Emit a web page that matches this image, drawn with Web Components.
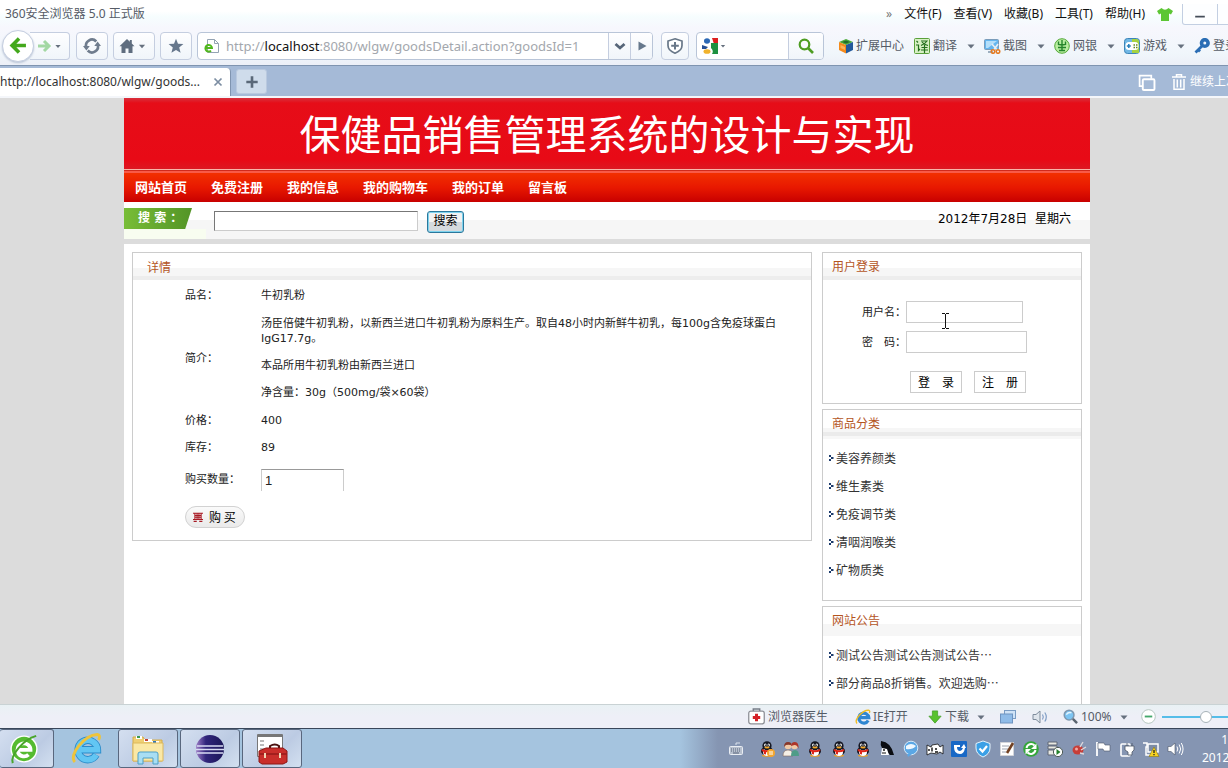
<!DOCTYPE html>
<html lang="zh-CN">
<head>
<meta charset="utf-8">
<title>保健品销售管理系统</title>
<style>
html, body { height: 100%; margin: 0; }
body { overflow: hidden; font: 12px/16px "Noto Sans", "Noto Sans CJK SC", sans-serif; color: #555b66; }
</style>
</head>
<body>
<browser-window>
  <title-bar slot="chrome"></title-bar>
  <tool-bar slot="chrome"></tool-bar>
  <tab-bar slot="chrome"></tab-bar>
  <shop-page></shop-page>
  <status-bar slot="foot"></status-bar>
  <task-bar slot="foot"></task-bar>
</browser-window>

<script>
const penguin = `<ellipse cx="8" cy="14.6" rx="5" ry="1.2" fill="#f0a020"/><ellipse cx="8" cy="10" rx="6" ry="4.6" fill="#151722"/><ellipse cx="8" cy="11" rx="4" ry="4" fill="#fff"/><ellipse cx="8" cy="4.8" rx="4.6" ry="4.6" fill="#151722"/><ellipse cx="6.3" cy="4" rx="1.2" ry="1.5" fill="#fff"/><ellipse cx="9.7" cy="4" rx="1.2" ry="1.5" fill="#fff"/><circle cx="6.6" cy="4.2" r=".6"/><circle cx="9.4" cy="4.2" r=".6"/><ellipse cx="8" cy="6.4" rx="2.6" ry="1" fill="#f5a623"/><path d="M3.2 8q4.8 2.6 9.6 0l.6 2q-5.4 2.6-10.8 0z" fill="#e02418"/><path d="M4.8 10l2.2.6v3l-2.2-.5z" fill="#e02418"/>`;
const ICONS = {
  back: `<path d="M8.500 1.500L2 8l6.500 6.500M2.500 8H15" fill="none" stroke="#43a81c" stroke-width="3.400"/>`,
  forward: `<path d="M8 3l5 5-5 5M13 8H2" fill="none" stroke="#a3d8a3" stroke-width="3"/>`,
  refresh: `<path d="M3 9.500A5.300 5.300 0 0 1 11.800 4M13 6.500A5.300 5.300 0 0 1 4.200 12" fill="none" stroke="#6f7c8d" stroke-width="2.400"/><path d="M0 8h6L3 12zM16 8h-6l3-4z" fill="#6f7c8d"/>`,
  home: `<path d="M8 1L.5 8.200h2V15h4v-4.500h3V15h4V8.200h2L12.800 5.600V2h-2v1.700z" fill="#5f6d7f"/>`,
  star: `<path d="M8 .8l2 5 5.400.3-4.200 3.400 1.400 5.300L8 11.900l-4.600 2.900 1.400-5.300L.6 6.100 6 5.800z" fill="#66778c"/>`,
  caret: `<path d="M4.500 6.500h7L8 10.500z" fill="#66707e"/>`,
  page: `<path d="M3.500 1.500h7l4 4v9h-11z" fill="#fff" stroke="#94a3b3"/><path d="M10.500 1.500v4h4" fill="none" stroke="#94a3b3"/><path d="M1.500 10H8a3.300 3.300 0 1 0-1 2.600" fill="none" stroke="#52b81e" stroke-width="2"/>`,
  chevron: `<path d="M3.500 6L8 10l4.500-4" fill="none" stroke="#566578" stroke-width="2.800"/>`,
  play: `<path d="M4.500 3.500L12.500 8l-8 4.500z" fill="#66788c"/>`,
  shield: `<path d="M8 .8L15 3v4.500q0 5-7 7.700-7-2.700-7-7.700V3z" fill="#fff" stroke="#687788" stroke-width="1.700"/><path d="M8 4v7.500M4.200 7.700h7.600" stroke="#687788" stroke-width="2"/>`,
  google: `<rect x="0" y="0" width="16" height="16" fill="#fff"/><path d="M10 0h6v6h-4z" fill="#dd1f1f"/><path d="M9 5h7v11H10q2-3-1-6z" fill="#1d9140"/><ellipse cx="5" cy="3" rx="3" ry="2.800" fill="#2b68b5"/><path d="M0 7l6 2-2 2H0z" fill="#254f94"/><ellipse cx="5" cy="13.500" rx="3.500" ry="2.300" fill="#f0b22c"/>`,
  lens: `<circle cx="6.500" cy="6.500" r="4.800" fill="none" stroke="#4e9d22" stroke-width="2.200"/><path d="M10 10l5 5" stroke="#4e9d22" stroke-width="2.600"/>`,
  cube: `<path d="M8 1l7 3-7 3-7-3z" fill="#4cab3a"/><path d="M1 4l7 3v8.500l-7-3.500z" fill="#f58a1c"/><path d="M15 4L8 7v8.500l7-3.500z" fill="#235a9c"/><path d="M4 4l4-1.500L12 4 8 5.500z" fill="#256b2c"/><path d="M2.500 7L7 9v3l-4.500-2z" fill="#ffb55a"/>`,
  trans: `<rect x=".5" y=".5" width="15" height="15" rx="1" fill="#d7f0c4" stroke="#5aa03a"/><path d="M2.500 3l1.500 1.500M2 7h2.500v5.500L6 11M7 3h6q-2 3-6 4.500M8 4q2 2.500 6 3.500M10.500 7v8M7.500 9.500h6M7 12h7" fill="none" stroke="#23701c" stroke-width="1.200"/>`,
  shot: `<rect x=".5" y="1.500" width="14" height="10" rx="1" fill="#64b5ee" stroke="#7b9cba"/><path d="M2 3h11L4 10H2z" fill="#b4dffa"/><path d="M4 14h5" stroke="#8097ad" stroke-width="1.500"/><path d="M8 6l6 7M14 6l-5 7" stroke="#e9eef2" stroke-width="1.600"/><circle cx="9" cy="13.500" r="1.800" fill="none" stroke="#e57b21" stroke-width="1.500"/><circle cx="14" cy="13.500" r="1.800" fill="none" stroke="#e57b21" stroke-width="1.500"/>`,
  bank: `<circle cx="8" cy="8" r="7.300" fill="#b9eda0" stroke="#54a938"/><path d="M4.500 3.500v3L8 7l3.500-.5v-3M8 2v11M4 9.500h8M5 12.500h6" fill="none" stroke="#24852a" stroke-width="1.400"/>`,
  game: `<rect x=".5" y=".5" width="15" height="15" rx="3" fill="#71b8e5" stroke="#3d85b8"/><path d="M8 1h4q3 0 3 3v11H8z" fill="#a6d33f"/><rect x="1.500" y="4" width="13" height="8" rx="3.500" fill="#fff"/><path d="M4.800 6v4M2.800 8h4" stroke="#2980bc" stroke-width="1.500"/><path d="M9.500 7h4M9.500 9.500h4" stroke="#648a20" stroke-width="1.500" stroke-dasharray="1.500 1"/>`,
  key: `<circle cx="10.800" cy="5" r="3.300" fill="none" stroke="#2a6db4" stroke-width="3.600"/><path d="M8 8L1.500 14.500M3.500 11l2.500 2.500" stroke="#2a6db4" stroke-width="2.800"/>`,
  shirt: `<path d="M4.500 2L0 5l2 3.500 2-1V15h8V7.500l2 1L16 5l-4.500-3Q8 5.500 4.500 2z" fill="#5cc634"/>`,
  min: `<path d="M2.500 11h11" stroke="#444d58" stroke-width="2"/>`,
  close: `<path d="M4 4l8 8M12 4l-8 8" stroke="#7c8da2" stroke-width="2"/>`,
  plus: `<path d="M8 1.500v13M1.500 8h13" stroke="#5a6878" stroke-width="3"/>`,
  copy: `<path d="M4.500 11.500H1.500v-10h11v3" fill="none" stroke="#fff" stroke-width="1.600"/><rect x="4.500" y="5" width="11" height="10" rx="1" fill="none" stroke="#fff" stroke-width="1.800"/>`,
  trash: `<path d="M1 3h14M5.500 2.500V.8h5v1.700M3 5v10.200h10V5M6.300 5.500v8M9.700 5.500v8" fill="none" stroke="#fff" stroke-width="1.500"/>`,
  arrow: `<path d="M2 2h4v4H2zM6 6h5v4H6zM2 10h4v4H2z" fill="#1d3c6d"/>`,
  cart: `<path d="M0 2h16M3 2v9M13 2v9M0 12h16M3 5.500h10M3 8.500h10M6.500 2v9M9.500 2v9M1 15h5M10 15h5" fill="none" stroke="#a81923" stroke-width="1.700"/>`,
  doctor: `<path d="M5 3V1h6v2" fill="none" stroke="#777d88" stroke-width="1.400"/><rect x=".7" y="3" width="14.600" height="12" rx="2" fill="#fff" stroke="#8d8f96" stroke-width="1.200"/><path d="M8 5.500v7M4.500 9h7" stroke="#d42026" stroke-width="2.800"/>`,
  ie: `<path d="M13.200 11.500a5 5 0 1 1 .6-2.900H4" fill="none" stroke="#2f86d1" stroke-width="3.200"/><path d="M2 14.500C-1.500 10.500 8 1 13.500 1.300q2 .2.800 2.700" fill="none" stroke="#f0bd24" stroke-width="1.400"/>`,
  down: `<path d="M5 1h6v6h4l-7 8-7-8h4z" fill="#58c22e" stroke="#3f9a22" stroke-width=".8"/>`,
  windows: `<rect x="4.500" y="1.500" width="11" height="8" fill="#cfe2f6" stroke="#7a9cc4"/><rect x=".5" y="5" width="12" height="9" fill="#8fbbe8" stroke="#6e93c0"/>`,
  sound: `<path d="M1 5.500h3L8 2v12L4 10.500H1z" fill="#dfe5ec" stroke="#7f8c9c"/><path d="M10.500 5.500q1.600 2.500 0 5M12.800 3.500q3 4.500 0 9" fill="none" stroke="#7f9dc4" stroke-width="1.200"/>`,
  zoom: `<circle cx="6.500" cy="6.500" r="5.200" fill="#7cc4f2" stroke="#7e98b0" stroke-width="1.600"/><path d="M3.500 6q2-3 5.500-2" stroke="#e4f5ff" fill="none" stroke-width="1.500"/><path d="M10.500 10.500l4.500 4.500" stroke="#5a6470" stroke-width="2.600"/>`,
  minus: `<circle cx="8" cy="8" r="7.300" fill="#fff" stroke="#b3c4bd"/><path d="M4 8h8" stroke="#45a86c" stroke-width="2"/>`,
  browser360: `<circle cx="16" cy="16" r="14.500" fill="#fff"/><circle cx="16" cy="16" r="13" fill="#55bb30"/><path d="M9.500 17h13.500a7 7 0 1 0-2.200 5" fill="none" stroke="#fff" stroke-width="4"/><path d="M4 31C1 23 15 6 29 2" fill="none" stroke="#49a52b" stroke-width="2.200"/>`,
  ieBig: `<path d="M26 22.500a10 10 0 1 1 1.300-5.200H10" fill="none" stroke="#2b8bc9" stroke-width="7.600"/><path d="M26 22.500a10 10 0 1 1 1.300-5.200H10" fill="none" stroke="#62c6f3" stroke-width="5.800"/><path d="M4 30C-3 23 14 2 27 1.500q4 .5 1.500 5.500" fill="none" stroke="#eec43c" stroke-width="3"/>`,
  folder: `<path d="M1 4h10l2 3h17v21H1z" fill="#efcf73" stroke="#d4ac4c"/><path d="M4 3h6v3H4z" fill="#fff"/><path d="M5 3h3v2H5z" fill="#3b9a4f"/><path d="M12 6h8v3h-8z" fill="#fff"/><path d="M13 6h3v2h-3z" fill="#c44433"/><path d="M20 8h7v3h-7z" fill="#fff"/><path d="M21 8h3v2h-3z" fill="#2d76ba"/><path d="M1 10h30v18H1z" fill="#fae8a5" stroke="#dcb85c"/><path d="M6 31V21q0-2 2-2h16q2 0 2 2v10h-5v-6H11v6z" fill="#a8def3" stroke="#4d9fc7"/>`,
  eclipse: `<defs><linearGradient id="g"><stop offset="0" stop-color="#9c7cc6"/><stop offset=".35" stop-color="#30257b"/><stop offset="1" stop-color="#1b1658"/></linearGradient></defs><circle cx="16" cy="16" r="14" fill="url(#g)"/><path d="M3 13h26M2 16.500h28M3 20h26" stroke="#d9dcf3" stroke-width="1.300"/>`,
  toolbox: `<path d="M1.500 1.500h25v22h-25z" fill="#fff" stroke="#777"/><path d="M2 3h24" stroke="#777" stroke-width="2"/><path d="M4 8h4M4 12h4M4 16h4" stroke="#777"/><path d="M14 16v-3q5-3 9 0v3" fill="none" stroke="#4a1210" stroke-width="2"/><path d="M3 18l7-3h17l4 3v11l-4 2H6l-3-2z" fill="#c92e2b" stroke="#8d1615"/><path d="M3.500 21h27" stroke="#7d1012"/><path d="M9 20v5M24 20v5" stroke="#f1d5b5" stroke-width="2"/>`,
  keyboard: `<path d="M8 4V2h4" fill="none" stroke="#dce3ed"/><rect x="1.500" y="5.500" width="13" height="8" rx="1" fill="#b7c0ce" stroke="#e9edf3"/><path d="M3 8h10M3 10h10" stroke="#56627a" stroke-dasharray="1 1"/><path d="M5 12h6" stroke="#56627a"/>`,
  qq: penguin,
  qqPlus: penguin + `<circle cx="12" cy="12" r="4" fill="#f3a62f"/><path d="M10 11h4M10 13h4" stroke="#fff"/>`,
  people: `<circle cx="5" cy="5" r="3.300" fill="#f1c9a5"/><path d="M1 6q0-5 4-5t4 4q-2-2-6-1z" fill="#87382a"/><circle cx="11.500" cy="5" r="3.300" fill="#f1c9a5"/><path d="M8 5q0-4 4-4t3.500 7q-1-4-4-4z" fill="#ad3428"/><path d="M0 15q0-6 5-6t5 6z" fill="#f5efe6" stroke="#85695c" stroke-width=".6"/><path d="M8 15q0-6 4-6t4 6z" fill="#4f9c88"/>`,
  cat: `<path d="M2 0q10 1 13 14h-4L7 10l-4 1V7q-2-3-1-7z" fill="#0b0d12"/><path d="M3 7l5 1 2 6H2z" fill="#fff"/><circle cx="5" cy="9" r=".9"/><path d="M3 12h4" stroke="#111"/>`,
  bubble: `<circle cx="8" cy="7" r="6.800" fill="#5ba7e5" stroke="#d6eafa"/><path d="M4 13l1 3 4-3" fill="#5ba7e5"/><path d="M3 5q5-4 10 0-4 4-10 3z" fill="#eff8ff"/>`,
  fish: `<path d="M0 4l4 2 1-2 6-1 2 3 3-2v9l-3-2-3 2-6-1-4 2z" fill="#fff" stroke="#111" stroke-width=".8"/><path d="M5 6.500v4M8 8h2M8 11h3M2 8v2" stroke="#111" stroke-width="1.400"/>`,
  blueBox: `<rect width="16" height="16" rx="1" fill="#1868c6"/><path d="M3 4h6v2H6q0 4 3 4 2 0 3-3h-2l3-4 2 4h-1q-1 6-5 6-6 0-6-7z" fill="#fff"/>`,
  guard: `<path d="M8 0l7 2.500V7q0 6-7 9-7-3-7-9V2.500z" fill="#3ba0e6" stroke="#e5f4fd"/><path d="M4.500 7.500L7.500 10.500 12 5" fill="none" stroke="#fff" stroke-width="2.200"/>`,
  note: `<path d="M1.500 1.500h13v13h-13z" fill="#fff" stroke="#d3d5da"/><path d="M3 5h7M3 8h6M3 11h4" stroke="#9ca3b0"/><path d="M14 2L8 12" stroke="#714022" stroke-width="2.600"/>`,
  sync: `<circle cx="8" cy="8" r="7.800" fill="#35a63b"/><path d="M3.500 7a4.700 4.700 0 0 1 8-2.500M12.500 9a4.700 4.700 0 0 1-8 2.500" fill="none" stroke="#fff" stroke-width="2"/><path d="M13.500 2.500V8H8zM2.500 13.500V8H8z" fill="#fff"/>`,
  server: `<path d="M1 1h9v3H1zM1 5h9v3H1zM1 9h8v5H1z" fill="#e8e8e2" stroke="#5f6674"/><circle cx="11" cy="11" r="4.600" fill="#fff" stroke="#4d5a55"/><path d="M9.500 8l4 3-4 3z" fill="#23802a"/>`,
  red: `<ellipse cx="7" cy="9" rx="5.500" ry="4.500" fill="#c73e38"/><path d="M9 6l3-5M10 9l5-3M9 12l4 1" stroke="#ddd8dc" stroke-width="1.400"/><circle cx="5.500" cy="8" r="1.500" fill="#f0a8a2"/>`,
  flag: `<path d="M2 1v14" stroke="#fff" stroke-width="1.800"/><path d="M3 2h6l1 2h5v6H9L8 8H3z" fill="#fff" stroke="#4c5566" stroke-width=".6"/>`,
  plug: `<rect x="2" y="3" width="9" height="12" rx="1" fill="none" stroke="#fff" stroke-width="1.600"/><path d="M8 2v3M13 2v3M6 5h9v4l-2 2v3H9v-3L6 9z" fill="#fff" stroke="#4c5566" stroke-width=".8"/>`,
  network: `<rect x="5" y="3" width="10" height="8" fill="#7c8ca6" stroke="#fff" stroke-width="1.500"/><path d="M0 2h4v4H3v8h5" fill="none" stroke="#fff" stroke-width="1.500"/><path d="M11 6l5 9.500H6z" fill="#f6d21f" stroke="#8a7512" stroke-width=".6"/><path d="M11 9v3M11 13v1.200" stroke="#222" stroke-width="1.300"/>`,
  volume: `<path d="M1 5.500h3L8 2v12L4 10.500H1z" fill="#fff" stroke="#4c5566" stroke-width=".6"/><path d="M10 5.500q1.600 2.500 0 5M12.200 3.500q3 4.500 0 9M14.300 2q3.500 6 0 12" fill="none" stroke="#fff"/>`
};

customElements.define('ui-icon', class extends HTMLElement {
  connectedCallback() {
    const name = this.getAttribute('name');
    const size = this.getAttribute('size') || 16;
    const box = ['browser360', 'ieBig', 'folder', 'eclipse', 'toolbox'].includes(name) ? 32 : 16;
    if (!this.shadowRoot) this.attachShadow({ mode: 'open' });
    this.shadowRoot.innerHTML = `<style>:host{display:inline-block;flex:none;line-height:0}svg{display:block;overflow:visible}</style>
      <svg width="${size}" height="${size}" viewBox="0 0 ${box} ${box}" aria-hidden="true">${ICONS[name]}</svg>`;
  }
});

function define(name, css, html) {
  const template = document.createElement('template');
  template.innerHTML = `<style>:host,*{box-sizing:border-box}button,input{font:inherit;color:inherit;margin:0}a{color:inherit;text-decoration:none}${css}</style>${html}`;
  customElements.define(name, class extends HTMLElement {
    constructor() {
      super();
      this.attachShadow({ mode: 'open' }).append(template.content.cloneNode(true));
    }
  });
}

define('browser-window', `
  :host{display:flex;flex-direction:column;height:100vh;background:#fff}
  main{flex:1;min-height:0;overflow:hidden;display:flex;background:#dcdcdc}
  ::slotted(*){flex:none}
  ::slotted(shop-page){flex:1}
`, `<slot name="chrome"></slot><main><slot></slot></main><slot name="foot"></slot>`);

define('title-bar', `
  :host{display:flex;align-items:center;height:28px;padding-left:5px;background:linear-gradient(#fff 40%,#f6fdfe 60%,#f7f7fd);white-space:nowrap}
  nav{margin-left:auto;display:flex;align-items:center;gap:12px;color:#111}
  .more{color:#777}
  .win{align-self:flex-start;display:flex;margin-left:-3px}
  button{height:21px;width:36px;padding:0;border:1px solid #c3cfe2;border-top:0;border-radius:0 0 0 3px;background:#fdfeff;display:flex;align-items:center;justify-content:center}
  .edge{width:10px;border-width:0 0 1px;border-radius:0}
`, `<span>360安全浏览器 5.0 正式版</span>
  <nav><span class="more">»</span><a href="#">文件(F)</a><a href="#">查看(V)</a><a href="#">收藏(B)</a><a href="#">工具(T)</a><a href="#">帮助(H)</a><ui-icon name="shirt"></ui-icon>
  <span class="win"><button aria-label="最小化"><ui-icon name="min" size="14"></ui-icon></button><button class="edge" aria-label="最大化"></button></span></nav>`);

define('tool-bar', `
  :host{display:flex;align-items:center;height:37px;padding:0 0 2px 2px;background:linear-gradient(#f7f7fd,#f0f6fb 70%,#eceff7);white-space:nowrap}
  button{height:28px;padding:0;border:1px solid #c5cee0;border-radius:4px;background:linear-gradient(#fefeff,#f0f5fa);display:flex;align-items:center;justify-content:center;flex:none}
  .back{width:32px;height:32px;border-radius:50%;background:#fff;z-index:1;box-shadow:0 1px 2px #b9c4d6}
  .fwd{width:40px;margin-left:-4px;margin-right:6px;border-left:0;border-radius:0 4px 4px 0}
  .sq{width:32px;margin-right:5px}
  .home{width:42px;margin-right:5px}
  .field{display:flex;height:28px;border:1px solid #b9c5d8;border-radius:4px;background:#fff;overflow:hidden}
  .field button{height:26px;border-width:0 0 0 1px;border-radius:0;width:22px}
  .address{flex:1;min-width:0;margin-right:8px}
  .url{position:relative;flex:1;display:flex;align-items:center;gap:6px;padding-left:6px;font-size:13px;color:#a3a7ad;overflow:hidden}
  .url b{font-weight:400;color:#111}
  .url input{position:absolute;inset:0;width:100%;border:0;background:transparent;outline:0}
  .safe{width:28px;margin-right:7px}
  .search{width:128px;margin-right:14px;align-items:center;padding-left:5px;flex:none}
  .search input{flex:1;min-width:0;border:0;background:transparent;outline:0}
  .search .go{width:35px}
  nav{display:flex;flex:0 0 390px;overflow:hidden}
  nav a{display:flex;align-items:center;gap:3px;width:70px;flex:none}
  nav a:first-child{width:76px;gap:2px}
  nav a ui-icon+ui-icon{margin-left:3px}
`, `<button class="back" aria-label="后退"><ui-icon name="back" size="17"></ui-icon></button>
  <button class="fwd" aria-label="前进"><ui-icon name="forward"></ui-icon><ui-icon name="caret" size="12"></ui-icon></button>
  <button class="sq" aria-label="刷新"><ui-icon name="refresh" size="18"></ui-icon></button>
  <button class="home" aria-label="主页"><ui-icon name="home"></ui-icon><ui-icon name="caret" size="14"></ui-icon></button>
  <button class="sq" aria-label="收藏"><ui-icon name="star"></ui-icon></button>
  <div class="field address"><div class="url"><ui-icon name="page"></ui-icon><span>http://<b>localhost</b>:8080/wlgw/goodsDetail.action?goodsId=1</span><input type="text" aria-label="地址"></div>
    <button aria-label="历史"><ui-icon name="chevron"></ui-icon></button><button aria-label="转到"><ui-icon name="play"></ui-icon></button></div>
  <button class="safe" aria-label="安全"><ui-icon name="shield"></ui-icon></button>
  <div class="field search"><ui-icon name="google"></ui-icon><ui-icon name="caret" size="10"></ui-icon><input type="text" aria-label="搜索"><button class="go" aria-label="搜索"><ui-icon name="lens"></ui-icon></button></div>
  <nav><a href="#"><ui-icon name="cube"></ui-icon>扩展中心</a><a href="#"><ui-icon name="trans"></ui-icon>翻译<ui-icon name="caret"></ui-icon></a><a href="#"><ui-icon name="shot"></ui-icon>截图<ui-icon name="caret"></ui-icon></a><a href="#"><ui-icon name="bank"></ui-icon>网银<ui-icon name="caret"></ui-icon></a><a href="#"><ui-icon name="game"></ui-icon>游戏<ui-icon name="caret"></ui-icon></a><a href="#"><ui-icon name="key"></ui-icon>登录</a></nav>`);

define('tab-bar', `
  :host{display:flex;height:33px;padding-top:2px;background:#a5bad7;border-top:1px solid #7f94b0;border-bottom:2px solid #f4f6fa;white-space:nowrap}
  .tab{display:flex;align-items:center;width:231px;background:#fff;border-right:1px solid #7f94b0;border-radius:0 4px 0 0;color:#333}
  .tab span{flex:1}
  button{padding:0;border:0;background:none;display:flex;align-items:center;justify-content:center}
  .tab button{width:24px}
  .new{width:31px;margin:1px 0 2px 5px;background:#cfdceb;border:1px solid #b9c9df;border-radius:3px}
  .right{margin-left:auto;display:flex;align-items:center;color:#fff;flex:0 0 90px;overflow:hidden}
  .right ui-icon+ui-icon{margin:0 3px 0 16px}
`, `<div class="tab"><span>http://localhost:8080/wlgw/goods...</span><button aria-label="关闭标签"><ui-icon name="close" size="14"></ui-icon></button></div>
  <button class="new" aria-label="新建标签"><ui-icon name="plus" size="14"></ui-icon></button>
  <div class="right"><ui-icon name="copy" size="17"></ui-icon><ui-icon name="trash"></ui-icon><span>继续上次</span></div>`);

define('panel-box', `
  :host{display:block;border:1px solid #ccc;background:#fff}
  h2{margin:0;height:27px;padding:5px 9px 0;font:12px/16px "Noto Sans CJK SC",sans-serif;color:#b4551f;background:linear-gradient(#fff 15px,#f6f6f6 15px 23px,#ededed 23px)}
  :host([wide]) h2{padding:6px 14px 0}
  :host([list]) h2{height:29px;background:linear-gradient(#fff 18px,#f6f6f6 18px 22px,#ebebeb 22px 26px,#f7f7f7 26px)}
  :host([flat]) h2{background:linear-gradient(#fff 17px,#f6f6f6 17px)}
`, `<h2><slot name="heading"></slot></h2><slot></slot>`);

define('link-list', `
  :host{display:block;padding:5px 5px 16px;color:#333;font:12px/28px "Noto Sans CJK SC",sans-serif}
`, `<slot></slot>`);

define('link-item', `
  :host{display:block}
  a{display:flex;align-items:center;height:28px}
`, `<a href="#"><ui-icon name="arrow" size="8"></ui-icon><slot></slot></a>`);

define('site-header', `
  :host{display:block;background:#fff;border-bottom:5px solid #dcdcdc}
  .banner{height:72px;border-bottom:1px solid #f9b5a8;background:linear-gradient(#d8303c,#e60d18 5px,#e80a16 62px,#dc1822);display:flex;align-items:flex-start;justify-content:center}
  h1{margin:0;font:400 41px/68px "Noto Sans CJK SC",sans-serif;color:#fff}
  nav{height:32px;display:flex;align-items:center;gap:24px;padding:2px 11px 0;background:linear-gradient(#d02a1c 1px,#f85a48 1px 3px,#f23000 3px,#e81800 55%,#c80000);font:bold 13px/20px "Noto Sans CJK SC",sans-serif;color:#fff}
  form{height:37px;display:flex;align-items:flex-start;padding-top:6px;background:linear-gradient(#fff 18px,#f6f6f6 18px);color:#000;font:12px/18px "DejaVu Sans","Noto Sans CJK SC",sans-serif}
  label{width:82px;height:31px;margin-right:8px;background:linear-gradient(transparent 21px,#f8fdf0 21px)}
  label span{display:block;width:68px;height:21px;line-height:21px;padding-left:14px;font-weight:bold;color:#fff;background:linear-gradient(90deg,#78bd37,#539426);clip-path:polygon(0 0,100% 0,90% 100%,0 100%)}
  input{width:204px;height:20px;margin-top:3px;border:1px solid #ccc;border-top-color:#777;border-left-color:#777;background:#fff}
  button{width:37px;height:22px;margin:3px 0 0 9px;padding:0 0 3px;line-height:16px;border:1px solid #2c789c;border-radius:3px;box-shadow:inset 0 0 0 1px #7ed3ee;background:linear-gradient(#f2f2f2 50%,#d5dade 50%);color:#000}
  time{margin:2px 19px 0 auto}
`, `<div class="banner"><h1>保健品销售管理系统的设计与实现</h1></div>
  <nav><a href="#">网站首页</a><a href="#">免费注册</a><a href="#">我的信息</a><a href="#">我的购物车</a><a href="#">我的订单</a><a href="#">留言板</a></nav>
  <form onsubmit="return false"><label for="q"><span>搜 索 ：</span></label><input id="q" type="text"><button>搜索</button><time datetime="2012-07-28">2012年7月28日&nbsp; 星期六</time></form>`);

define('goods-detail', `
  :host{display:block;padding:2px 30px 4px 52px;color:#222;font:11px/15px "DejaVu Sans","Noto Sans CJK SC",sans-serif}
  table{width:100%;border-collapse:collapse}
  th,td{padding:0;font-weight:400;text-align:left;height:27px}
  th{width:76px}
  .intro td{height:98px}
  p{margin:0 0 12px}
  p:last-child{margin:0}
  .qty td{height:37px}
  .qty input{display:block;width:83px;height:22px;padding:0 3px;border:1px solid #ccc;border-top-color:#999;border-bottom:0;font:13px/20px "Liberation Sans",sans-serif}
  .buy td{height:38px}
  button{display:flex;align-items:center;gap:6px;width:60px;height:22px;padding:0 7px;border:1px solid #d2d2d2;border-radius:11px;background:linear-gradient(#fafafa,#eaeaea);font:12px/20px "Noto Sans CJK SC",sans-serif;color:#000;white-space:nowrap}
`, `<form onsubmit="return false"><table>
  <tr><th>品名：</th><td>牛初乳粉</td></tr>
  <tr class="intro"><th>简介：</th><td><p>汤臣倍健牛初乳粉，以新西兰进口牛初乳粉为原料生产。取自48小时内新鲜牛初乳，每100g含免疫球蛋白IgG17.7g。</p><p>本品所用牛初乳粉由新西兰进口</p><p>净含量：30g（500mg/袋×60袋）</p></td></tr>
  <tr><th>价格：</th><td>400</td></tr>
  <tr><th>库存：</th><td>89</td></tr>
  <tr class="qty"><th><label for="n">购买数量：</label></th><td><input id="n" type="text" value="1"></td></tr>
  <tr class="buy"><td colspan="2"><button><ui-icon name="cart" size="10"></ui-icon>购 买</button></td></tr>
  </table></form>`);

define('login-form', `
  :host{display:block;position:relative;padding:21px 0 10px 39px;color:#222;font:11px/15px "DejaVu Sans","Noto Sans CJK SC",sans-serif}
  div{display:flex;align-items:center;margin-bottom:8px}
  label{width:44px;flex:none}
  input{width:117px;height:22px;border:1px solid #ccc;background:#fff}
  #p{width:121px}
  .act{gap:12px;margin:18px 0 0 48px}
  button{width:52px;height:22px;padding:0;border:1px solid #ccc;background:#fff;font:12px/18px "Noto Sans CJK SC",sans-serif;color:#000}
  svg{position:absolute;left:119px;top:33px}
`, `<form onsubmit="return false"><div><label for="u">用户名：</label><input id="u" type="text"></div><div><label for="p">密　码：</label><input id="p" type="password"></div>
  <div class="act"><button>登　录</button><button type="button">注　册</button></div></form>
  <svg width="7" height="16" viewBox="0 0 7 16" aria-hidden="true"><path d="M0 .5h3M4 .5h3M3.500 1v14M0 15.500h3M4 15.500h3" stroke="#111" fill="none"/></svg>`);

define('shop-page', `
  :host{display:flex;justify-content:center;padding-right:14px;min-width:0}
  .sheet{width:100%;max-width:966px;background:#fff}
  .cols{display:grid;grid-template-columns:minmax(0,1fr) 260px;gap:10px;padding:8px;align-items:start}
  aside{display:grid;gap:5px}
`, `<div class="sheet"><site-header></site-header><div class="cols">
  <panel-box wide><span slot="heading">详情</span><goods-detail></goods-detail></panel-box>
  <aside>
    <panel-box><span slot="heading">用户登录</span><login-form></login-form></panel-box>
    <panel-box list><span slot="heading">商品分类</span><link-list><link-item>美容养颜类</link-item><link-item>维生素类</link-item><link-item>免疫调节类</link-item><link-item>清咽润喉类</link-item><link-item>矿物质类</link-item></link-list></panel-box>
    <panel-box list flat><span slot="heading">网站公告</span><link-list><link-item>测试公告测试公告测试公告…</link-item><link-item>部分商品8折销售。欢迎选购…</link-item></link-list></panel-box>
  </aside></div></div>`);

define('status-bar', `
  :host{display:flex;align-items:center;justify-content:flex-end;height:24px;border-top:1px solid #c9d2d4;background:linear-gradient(#e9f1f4,#eeeff7 50%);white-space:nowrap;overflow:hidden}
  span,a{display:flex;align-items:center;gap:3px;flex:none}
  .a{width:107px}.b{width:73px;gap:2px}.c{width:72px}.d{width:32px}.e{width:31px}.f{width:78px}
  .c ui-icon+ui-icon,.f ui-icon+ui-icon{margin-left:1px}
  input{appearance:none;width:66px;height:16px;margin-left:6px;background:linear-gradient(#56bde8,#56bde8) center/100% 2px no-repeat;flex:none}
  input::-webkit-slider-thumb{appearance:none;width:12px;height:12px;border:1px solid #a7b2b8;border-radius:50%;background:#fff}
`, `<a class="a" href="#"><ui-icon name="doctor" size="17"></ui-icon>浏览器医生</a><a class="b" href="#"><ui-icon name="ie"></ui-icon>IE打开</a><a class="c" href="#"><ui-icon name="down" size="14"></ui-icon>下载<ui-icon name="caret"></ui-icon></a>
  <span class="d"><ui-icon name="windows"></ui-icon></span><span class="e"><ui-icon name="sound"></ui-icon></span><span class="f"><ui-icon name="zoom" size="15"></ui-icon>100%<ui-icon name="caret"></ui-icon></span><ui-icon name="minus" size="15"></ui-icon><input type="range" min="0" max="100" value="70" aria-label="缩放">`);

define('task-bar', `
  :host{display:flex;height:40px;border-top:1px solid #39465a;background:linear-gradient(90deg,#a5c4df,#a5c4df 680px,#8595b2 718px);overflow:hidden}
  button{width:60px;margin-right:2px;padding:0;border:1px solid #59677e;border-radius:3px;background:linear-gradient(135deg,#d4dff0,#bccbe3 60%,#d3e0f0);display:flex;align-items:center;justify-content:center;flex:none}
  .start{width:54px;padding-right:5px;border-left:0}
  .plain{border-color:transparent;background:none}
  .tray{margin-left:auto;display:flex;align-items:center;gap:8px;color:#fff;flex:none}
  .tray ui-icon:first-child{margin-right:7px}
  .clock{margin-left:11px;width:26px;height:36px;line-height:18px;text-align:right;white-space:nowrap}
`, `<button class="start" aria-label="360浏览器"><ui-icon name="browser360" size="30"></ui-icon></button><button class="plain" aria-label="Internet Explorer"><ui-icon name="ieBig" size="31"></ui-icon></button><button aria-label="资源管理器"><ui-icon name="folder" size="32"></ui-icon></button><button aria-label="Eclipse"><ui-icon name="eclipse" size="32"></ui-icon></button><button aria-label="工具箱"><ui-icon name="toolbox" size="32"></ui-icon></button>
  <div class="tray"><ui-icon name="keyboard"></ui-icon><ui-icon name="qqPlus"></ui-icon><ui-icon name="people"></ui-icon><ui-icon name="qq"></ui-icon><ui-icon name="qq"></ui-icon><ui-icon name="qq"></ui-icon><ui-icon name="cat"></ui-icon><ui-icon name="bubble"></ui-icon><ui-icon name="fish"></ui-icon><ui-icon name="blueBox"></ui-icon><ui-icon name="guard"></ui-icon><ui-icon name="note"></ui-icon><ui-icon name="sync"></ui-icon><ui-icon name="server"></ui-icon><ui-icon name="red"></ui-icon><ui-icon name="flag"></ui-icon><ui-icon name="plug"></ui-icon><ui-icon name="network"></ui-icon><ui-icon name="volume"></ui-icon><div class="clock">1<br>2012</div></div>`);
</script>
</body>
</html>
